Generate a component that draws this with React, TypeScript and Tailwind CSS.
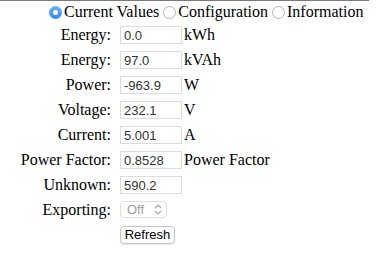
const rows = [
  { label: "Energy:", value: "0.0", unit: "kWh" },
  { label: "Energy:", value: "97.0", unit: "kVAh" },
  { label: "Power:", value: "-963.9", unit: "W" },
  { label: "Voltage:", value: "232.1", unit: "V" },
  { label: "Current:", value: "5.001", unit: "A" },
  { label: "Power Factor:", value: "0.8528", unit: "Power Factor" },
  { label: "Unknown:", value: "590.2", unit: "" },
];

function Radio({ checked, label }: { checked?: boolean; label: string }) {
  return (
    <label className="inline-flex items-center">
      {checked ? (
        <span className="w-[13px] h-[13px] rounded-full bg-gradient-to-b from-[#6cb3fa] to-[#2a8af6] flex items-center justify-center mr-[2px]">
          <span className="w-[5px] h-[5px] rounded-full bg-white" />
        </span>
      ) : (
        <span className="w-[13px] h-[13px] rounded-full border border-[#b5b5b5] bg-white mr-[2px]" />
      )}
      <span>{label}</span>
    </label>
  );
}

export default function App() {
  return (
    <div className="w-[381px] h-[261px] bg-white text-black font-['Liberation_Serif',serif] text-[16px] leading-none">
      <div className="w-[369px] border-t border-[#7a7a7a]" />
      <div className="flex items-center h-[21px] pt-[1px] pl-[49px] gap-[4px]">
        <Radio checked label="Current Values" />
        <Radio label="Configuration" />
        <Radio label="Information" />
      </div>
      {rows.map((r, i) => (
        <div key={i} className="flex items-center h-[25px]">
          <div className="w-[111px] text-right">{r.label}</div>
          <input
            readOnly
            value={r.value}
            className="ml-[9px] w-[62px] h-[18px] border border-[#dcdcdc] px-[3px] pt-[2px] font-['Liberation_Sans',sans-serif] text-[13px] text-[#333] outline-none"
          />
          <span className="ml-[2px]">{r.unit}</span>
        </div>
      ))}
      <div className="flex items-center h-[25px]">
        <div className="w-[111px] text-right">Exporting:</div>
        <div className="ml-[9px] w-[47px] h-[17px] border border-[#dedede] rounded-[4px] flex items-center justify-between pl-[6px] pr-[4px] font-['Liberation_Sans',sans-serif] text-[13px] text-[#a0a0a0]">
          <span>Off</span>
          <svg width="8" height="11" viewBox="0 0 8 11" fill="none" stroke="#a8a8a8" strokeWidth="1.2">
            <path d="M1 4 L4 1 L7 4" />
            <path d="M1 7 L4 10 L7 7" />
          </svg>
        </div>
      </div>
      <div className="flex items-center h-[25px]">
        <button className="ml-[120px] w-[55px] h-[18px] border border-[#c4c4c4] rounded-[4px] bg-white font-['Liberation_Sans',sans-serif] text-[13px] text-black shadow-[0_1px_0_rgba(0,0,0,0.08)]">
          Refresh
        </button>
      </div>
    </div>
  );
}
